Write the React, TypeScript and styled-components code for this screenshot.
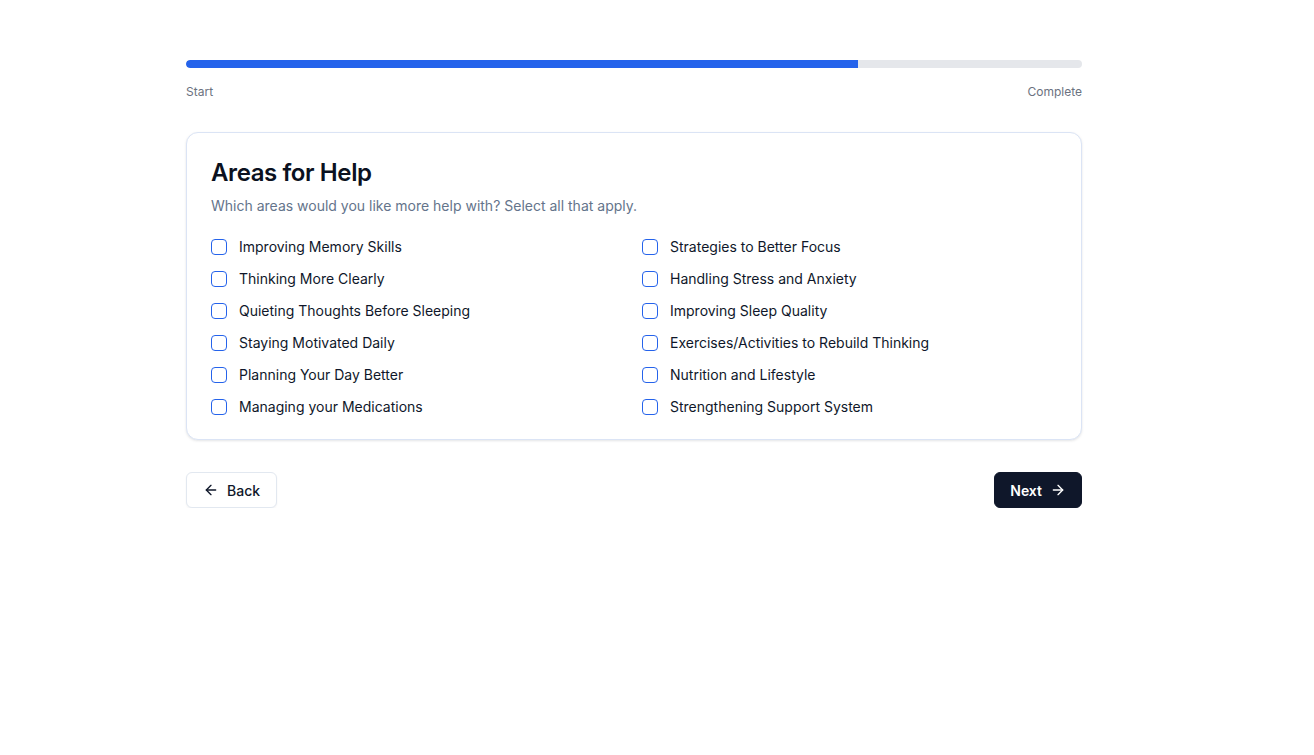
import React from "react";
import styled, { createGlobalStyle } from "styled-components";

const Global = createGlobalStyle`
  html, body { margin: 0; padding: 0; background: #ffffff; }
  body { font-family: Inter, "Noto Sans", Arial, sans-serif; color: #0f172a; }
  * { box-sizing: border-box; }
`;

const Page = styled.div`
  width: 896px;
  margin-left: 186px;
  padding-top: 60px;
`;

const Progress = styled.div`
  display: flex;
  flex-direction: column;
`;

const Track = styled.div`
  height: 8px;
  border-radius: 9999px;
  background: #e5e7eb;
  overflow: hidden;
`;

const Fill = styled.div`
  height: 100%;
  background: #2563eb;
  border-radius: 9999px 0 0 9999px;
`;

const Labels = styled.div`
  display: flex;
  justify-content: space-between;
  margin-top: 16px;
  font-size: 12px;
  line-height: 16px;
  color: #6b7280;
`;

const Card = styled.section`
  margin-top: 32px;
  border: 1px solid #dbe4f5;
  border-radius: 12px;
  background: #fff;
  box-shadow: 0 1px 3px rgba(15, 23, 42, 0.08), 0 1px 2px rgba(15, 23, 42, 0.04);
  padding: 24px 24px 22px;
`;

const Title = styled.h2`
  margin: 0;
  font-size: 24px;
  line-height: 32px;
  font-weight: 600;
  letter-spacing: -0.4px;
  color: #0b1120;
`;

const Subtitle = styled.p`
  margin: 7px 0 0;
  font-size: 14px;
  line-height: 20px;
  color: #64748b;
`;

const Options = styled.div`
  margin-top: 21px;
  display: grid;
  grid-template-columns: 1fr 1fr;
  column-gap: 16px;
  row-gap: 12px;
`;

const Option = styled.label`
  display: flex;
  align-items: center;
  gap: 12px;
  font-size: 14px;
  line-height: 20px;
  color: #0f172a;
  cursor: pointer;
`;

const Box = styled.span`
  width: 16px;
  height: 16px;
  flex: none;
  border: 1px solid #2563eb;
  border-radius: 4px;
  background: #fff;
`;

const Actions = styled.div`
  margin-top: 32px;
  display: flex;
  justify-content: space-between;
`;

const Button = styled.button<{ $primary?: boolean }>`
  height: 36px;
  display: inline-flex;
  align-items: center;
  gap: 8px;
  padding: 0 ${(p) => (p.$primary ? "15px" : "16px")};
  border-radius: 6px;
  font-family: inherit;
  font-size: 14px;
  font-weight: ${(p) => (p.$primary ? 600 : 500)};
  border: 1px solid ${(p) => (p.$primary ? "#0f172a" : "#e2e8f0")};
  background: ${(p) => (p.$primary ? "#0f172a" : "#fff")};
  color: ${(p) => (p.$primary ? "#fff" : "#0f172a")};
  box-shadow: ${(p) => (p.$primary ? "none" : "0 1px 2px rgba(15,23,42,0.05)")};
  cursor: pointer;
`;

const Arrow = ({ dir }: { dir: "left" | "right" }) => (
  <svg width="16" height="16" viewBox="0 0 24 24" fill="none" stroke="currentColor" strokeWidth="2" strokeLinecap="round" strokeLinejoin="round">
    {dir === "left" ? (
      <>
        <path d="M19 12H5" />
        <path d="M12 19l-7-7 7-7" />
      </>
    ) : (
      <>
        <path d="M5 12h14" />
        <path d="M12 5l7 7-7 7" />
      </>
    )}
  </svg>
);

const items = [
  "Improving Memory Skills",
  "Strategies to Better Focus",
  "Thinking More Clearly",
  "Handling Stress and Anxiety",
  "Quieting Thoughts Before Sleeping",
  "Improving Sleep Quality",
  "Staying Motivated Daily",
  "Exercises/Activities to Rebuild Thinking",
  "Planning Your Day Better",
  "Nutrition and Lifestyle",
  "Managing your Medications",
  "Strengthening Support System",
];

export default function App() {
  return (
    <>
      <Global />
      <Page>
        <Progress>
          <Track>
            <Fill style={{ width: "75%" }} />
          </Track>
          <Labels>
            <span>Start</span>
            <span>Complete</span>
          </Labels>
        </Progress>
        <Card>
          <Title>Areas for Help</Title>
          <Subtitle>Which areas would you like more help with? Select all that apply.</Subtitle>
          <Options>
            {items.map((t) => (
              <Option key={t}>
                <Box />
                {t}
              </Option>
            ))}
          </Options>
        </Card>
        <Actions>
          <Button>
            <Arrow dir="left" />
            Back
          </Button>
          <Button $primary>
            Next
            <Arrow dir="right" />
          </Button>
        </Actions>
      </Page>
    </>
  );
}
